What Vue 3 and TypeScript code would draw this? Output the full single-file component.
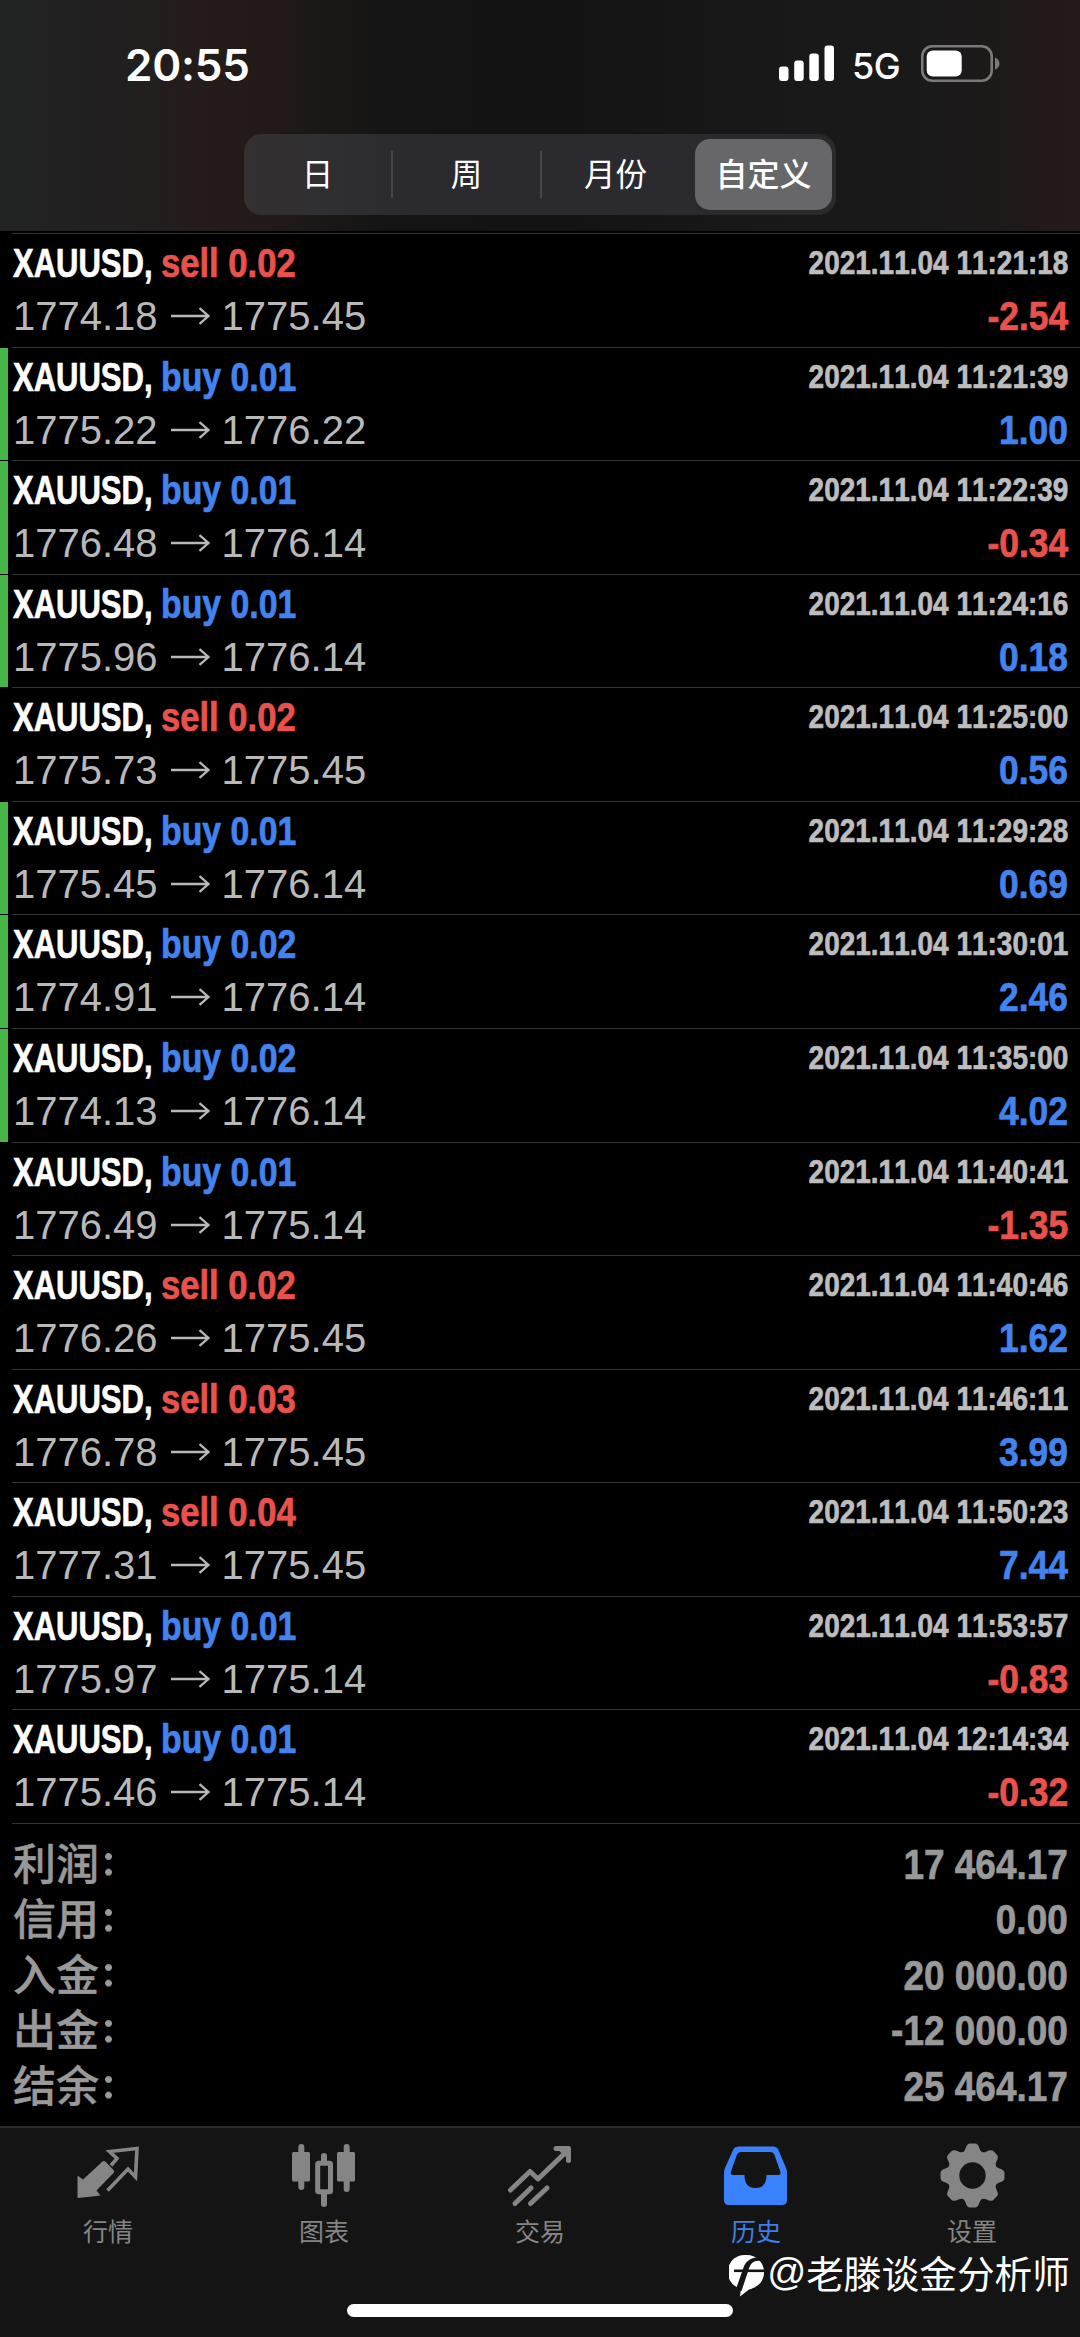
<script setup lang="ts">
interface Deal {
  side: 'buy' | 'sell'
  volume: string
  open: string
  close: string
  time: string
  profit: string
  tp?: boolean
}

const segments: string[] = ['日', '周', '月份', '自定义']

const deals: Deal[] = [
  { side: 'sell', volume: '0.02', open: '1774.18', close: '1775.45', time: '11:21:18', profit: '-2.54' },
  { side: 'buy', volume: '0.01', open: '1775.22', close: '1776.22', time: '11:21:39', profit: '1.00', tp: true },
  { side: 'buy', volume: '0.01', open: '1776.48', close: '1776.14', time: '11:22:39', profit: '-0.34', tp: true },
  { side: 'buy', volume: '0.01', open: '1775.96', close: '1776.14', time: '11:24:16', profit: '0.18', tp: true },
  { side: 'sell', volume: '0.02', open: '1775.73', close: '1775.45', time: '11:25:00', profit: '0.56' },
  { side: 'buy', volume: '0.01', open: '1775.45', close: '1776.14', time: '11:29:28', profit: '0.69', tp: true },
  { side: 'buy', volume: '0.02', open: '1774.91', close: '1776.14', time: '11:30:01', profit: '2.46', tp: true },
  { side: 'buy', volume: '0.02', open: '1774.13', close: '1776.14', time: '11:35:00', profit: '4.02', tp: true },
  { side: 'buy', volume: '0.01', open: '1776.49', close: '1775.14', time: '11:40:41', profit: '-1.35' },
  { side: 'sell', volume: '0.02', open: '1776.26', close: '1775.45', time: '11:40:46', profit: '1.62' },
  { side: 'sell', volume: '0.03', open: '1776.78', close: '1775.45', time: '11:46:11', profit: '3.99' },
  { side: 'sell', volume: '0.04', open: '1777.31', close: '1775.45', time: '11:50:23', profit: '7.44' },
  { side: 'buy', volume: '0.01', open: '1775.97', close: '1775.14', time: '11:53:57', profit: '-0.83' },
  { side: 'buy', volume: '0.01', open: '1775.46', close: '1775.14', time: '12:14:34', profit: '-0.32' },
]

const summary: [string, string][] = [
  ['利润', '17 464.17'],
  ['信用', '0.00'],
  ['入金', '20 000.00'],
  ['出金', '-12 000.00'],
  ['结余', '25 464.17'],
]
</script>

<template>
  <div class="screen">
    <header class="top">
      <div class="status">
        <span class="clock">20:55</span>
        <div class="indicators">
          <svg class="signal" width="56" height="36" viewBox="0 0 56 36" fill="#fff">
            <rect x="0" y="21.5" width="9.5" height="14.5" rx="3" />
            <rect x="15.2" y="15.5" width="9.5" height="20.5" rx="3" />
            <rect x="30.3" y="8.5" width="9.5" height="27.5" rx="3" />
            <rect x="45.5" y="0.5" width="9.5" height="35.5" rx="3" />
          </svg>
          <span class="network">5G</span>
          <svg class="battery" width="80" height="38" viewBox="0 0 80 38">
            <rect x="1.3" y="1.3" width="69.4" height="34.4" rx="10" fill="none" stroke="#7b7979" stroke-width="2.6" />
            <rect x="5.7" y="5.5" width="35" height="26" rx="6" fill="#fff" />
            <path d="M74 12.500 C80 14.500 80 22.500 74 24.500Z" fill="#7b7979" />
          </svg>
        </div>
      </div>
      <nav class="segmented">
        <button v-for="(s, i) in segments" :key="s" :class="['segment', { active: i === 3 }]">{{ s }}</button>
      </nav>
    </header>

    <main class="history">
      <article v-for="d in deals" :key="d.time" :class="['deal', { tp: d.tp }]">
        <div class="line first">
          <span class="symbol"><b>XAUUSD,</b></span>
          <span :class="['side', d.side]">{{ d.side }} {{ d.volume }}</span>
          <time class="time">2021.11.04 {{ d.time }}</time>
        </div>
        <div class="line second">
          <span class="price">{{ d.open }}</span>
          <svg class="arrow" width="40" height="18" viewBox="0 0 40 18" fill="none" stroke="#b9b9b9" stroke-width="2.300">
            <path d="M0 9H37M28.500 1.200L37.500 9L28.500 16.800" />
          </svg>
          <span class="price">{{ d.close }}</span>
          <span :class="['profit', d.profit.startsWith('-') ? 'sell' : 'buy']">{{ d.profit }}</span>
        </div>
      </article>
    </main>

    <dl class="summary">
      <div v-for="[label, value] in summary" :key="label" class="total">
        <dt>{{ label }}<i class="colon"></i></dt>
        <dd>{{ value }}</dd>
      </div>
    </dl>

    <footer class="tabs">
      <a class="tab">
        <svg width="68" height="68" viewBox="0 0 68 68">
          <path d="M3.500 25.500L9 29.500L28.500 11.500Q30 10.300 31.500 11.700L39.500 20Q40.800 21.500 39.500 23L22.500 40.500L26.500 45.500L4.500 48Q3.500 48 3.500 47Z" transform="translate(0 2)" fill="#858585" />
          <path d="M37 15.500L43 8.500L35.500 1.500L63 -1.500L61.500 27L54 19L33.500 40.500" transform="translate(0 2)" fill="none" stroke="#858585" stroke-width="3.600" />
        </svg>
        <span>行情</span>
      </a>
      <a class="tab">
        <svg width="68" height="68" viewBox="0 0 68 68" fill="#858585">
          <rect x="8.300" y="-4" width="6" height="46" rx="3" />
          <rect x="2" y="4" width="18" height="29.500" rx="1.500" />
          <rect x="31" y="5" width="6" height="54" rx="3" />
          <rect x="27.700" y="15.300" width="12.800" height="28.500" rx="1" fill="#141414" stroke="#858585" stroke-width="5" />
          <rect x="53.700" y="-4" width="6" height="48" rx="3" />
          <rect x="47" y="4" width="18" height="29.500" rx="1.500" />
        </svg>
        <span>图表</span>
      </a>
      <a class="tab">
        <svg width="68" height="68" viewBox="0 0 68 68" fill="none" stroke="#858585" stroke-width="5" stroke-linecap="round" stroke-linejoin="round">
          <path d="M4.500 42L24 23.500L32 31L61 3M50 0.500H62.500V12.500" />
          <path d="M9 55.500L25 40M24.500 55.500L41 40" />
          <path d="M52 0.500H62.500V10Z" fill="#858585" stroke-width="2" />
        </svg>
        <span>交易</span>
      </a>
      <a class="tab current">
        <svg width="68" height="68" viewBox="0 0 68 68">
          <path fill-rule="evenodd" d="M16 -1.500H52Q54.500 -1.500 56 1L64 20Q65 22.500 65 25V52Q65 57 60 57H7Q2 57 2 52V25Q2 22.500 3 20L11.500 1Q13 -1.500 16 -1.500ZM18.500 4Q16 4 15 6.500L9 23.500Q8 27 11 27H22.500Q22.500 40 33.500 40Q44.500 40 44.500 27H56.500Q59.300 27 58.300 23.500L52.300 6.500Q51.300 4 48.500 4Z" fill="#3a82fb" />
        </svg>
        <span>历史</span>
      </a>
      <a class="tab">
        <svg width="68" height="68" viewBox="0 0 68 68">
          <g transform="translate(34.500 27.500)">
            <g fill="#858585">
              <path
                v-for="n in 8"
                :key="n"
                :transform="`rotate(${n * 45})`"
                d="M-12 -22Q-8 -23.500 -7 -27Q-5.500 -32 -2.500 -32H2.500Q5.500 -32 7 -27Q8 -23.500 12 -22V0H-12Z"
              />
            </g>
            <circle r="13.200" fill="#141414" />
          </g>
        </svg>
        <span>设置</span>
      </a>
      <div class="watermark">
        <svg width="36" height="44" viewBox="0 0 36 44">
          <path d="M17.500 1A17 17 0 0 1 35 18.500C35 28 28 33.500 20 35.500L11 42.500L12 34.500A17 17 0 0 1 17.500 1Z" fill="#fff" />
          <path d="M31 3.500C21 2.500 16 8 14 15L7 35L12.500 37L19.500 16C21.500 9 25 6 32 7Z" fill="#141414" />
          <path d="M5 16.800H36" fill="none" stroke="#141414" stroke-width="2.600" />
        </svg>
        <span class="at">@</span><span>老滕谈金分析师</span>
      </div>
      <div class="home"></div>
    </footer>
  </div>
</template>

<style>
body {
  background: #000;
}
</style>

<style scoped>
.screen {
  box-sizing: border-box;
  width: 1080px;
  height: 2337px;
  display: flex;
  flex-direction: column;
  overflow: hidden;
  background: #000;
  color: #fff;
  font-family: 'Liberation Sans', 'Noto Sans CJK SC', sans-serif;
  font-kerning: none;
}

.top {
  box-sizing: border-box;
  height: 231px;
  flex: none;
  background: linear-gradient(90deg, #222323 0, #212020 100px, #231c1b 190px, #221a19 270px, #151414 380px, #131313 560px, #191919 800px, #1b1919 960px, #221a19 1040px, #231a19 1080px);
}

.status {
  height: 134px;
  display: flex;
  justify-content: space-between;
  align-items: flex-start;
}

.clock {
  margin: 38px 0 0 125px;
  font: 600 44px/54px Inter, sans-serif;
  letter-spacing: -0.200px;
}

.indicators {
  display: flex;
  align-items: flex-start;
  margin-right: 79px;
}

.signal {
  margin-top: 45px;
}

.network {
  width: 50px;
  margin: 46px 19px 0 17px;
  font: 500 36px/40px Inter, sans-serif;
  letter-spacing: -0.500px;
}

.battery {
  margin-top: 45px;
}

.segmented {
  box-sizing: border-box;
  width: 592px;
  height: 81px;
  margin-left: 244px;
  padding: 5px 4px 5px 0;
  display: flex;
  align-items: center;
  border-radius: 18px;
  background: linear-gradient(90deg, #342f30 0, #302f31 70px, #2a2a2f 180px, #2a2a2f 400px, #2a2a2c 592px);
}

.segment {
  flex: 1;
  height: 47px;
  margin: 0;
  padding: 0 0 5px;
  border: 0;
  border-right: 2px solid #47474a;
  background: none;
  color: #fff;
  font: 400 31.500px/42px 'Noto Sans CJK SC', sans-serif;
}

.segment:nth-child(3) {
  border-color: transparent;
}

.segment.active {
  flex: none;
  width: 137px;
  height: 71px;
  margin-left: 4px;
  border: 0;
  border-radius: 15px;
  background: #676669;
  font-size: 32px;
  font-weight: 500;
}

.history {
  flex: none;
  padding-top: 2px;
}

.deal {
  box-sizing: border-box;
  height: 113.571px;
  padding: 7px 12px 0 13px;
  background: linear-gradient(#333, #333) 12px 0 / 100% 1px no-repeat;
}

.deal.tp {
  background:
    linear-gradient(#333, #333) 12px 0 / 100% 1px no-repeat,
    linear-gradient(#48b549, #48b549) 0 1px / 8px 100% no-repeat;
}

.line {
  display: flex;
  white-space: nowrap;
}

.first {
  height: 53px;
  font-size: 40px;
  font-weight: 700;
  line-height: 46px;
}

.symbol,
.side,
.time,
.profit,
dd {
  -webkit-text-stroke: 0.700px currentColor;
}

.symbol {
  width: 148px;
}

.symbol b {
  display: inline-block;
  transform: scaleX(0.775);
  transform-origin: 0 50%;
}

.side {
  transform: scaleX(0.865);
  transform-origin: 0 50%;
}

.side.buy {
  transform: scaleX(0.845);
}

.buy {
  color: #4283ee;
}

.sell {
  color: #e8524b;
}

.time {
  margin-left: auto;
  color: #bdbdbd;
  font-size: 33px;
  transform: scaleX(0.848);
  transform-origin: 100% 50%;
}

.second {
  height: 46px;
  align-items: center;
  color: #b9b9b9;
  font-size: 40px;
  line-height: 46px;
}

.price {
  width: 144.600px;
}

.arrow {
  margin: 0 11px 0 13px;
}

.profit {
  margin-left: auto;
  font-weight: 700;
  transform: scaleX(0.885);
  transform-origin: 100% 50%;
}

.summary {
  flex: 1;
  margin: 0;
  padding: 14px 12px 0 13px;
  background: linear-gradient(#333, #333) 12px 0 / 100% 1px no-repeat;
  color: #999;
}

.total {
  height: 55.600px;
  display: flex;
  justify-content: space-between;
  align-items: center;
}

dt {
  display: flex;
  align-items: center;
  font: 500 43px/50px 'Liberation Sans', 'Noto Sans CJK SC', sans-serif;
  -webkit-text-stroke: 0.400px currentColor;
}

.colon {
  width: 7px;
  height: 23px;
  margin-left: 6px;
  background: radial-gradient(circle at 3.500px 3.500px, #999 3px, transparent 3.800px) 0 0 / 7px 15.700px;
}

dd {
  margin: 0;
  font: 700 42px/54px 'Liberation Sans', sans-serif;
  transform: scaleX(0.88);
  transform-origin: 100% 50%;
}

.tabs {
  position: relative;
  box-sizing: border-box;
  height: 211px;
  flex: none;
  display: flex;
  border-top: 2px solid #2b2b2b;
  background: #141414;
}

.tab {
  flex: 1;
  display: flex;
  flex-direction: column;
  align-items: center;
  color: #858585;
  font: 400 25px/34px 'Noto Sans CJK SC', sans-serif;
}

.tab svg {
  margin: 20px 0 -3px;
  overflow: visible;
}

.tab.current {
  color: #3f7fe6;
}

.watermark {
  position: absolute;
  right: 10px;
  bottom: 40px;
  display: flex;
  align-items: center;
  color: #fff;
  font: 400 37.700px/50px 'Noto Sans CJK SC', sans-serif;
}

.watermark svg {
  position: relative;
  top: 4px;
  left: 1px;
}

.at {
  width: 39px;
  margin-left: 3px;
  font: 400 38.500px/46px 'Liberation Sans', sans-serif;
}

.home {
  position: absolute;
  left: 347px;
  bottom: 20px;
  width: 386px;
  height: 13px;
  border-radius: 7px;
  background: #fff;
}
</style>
